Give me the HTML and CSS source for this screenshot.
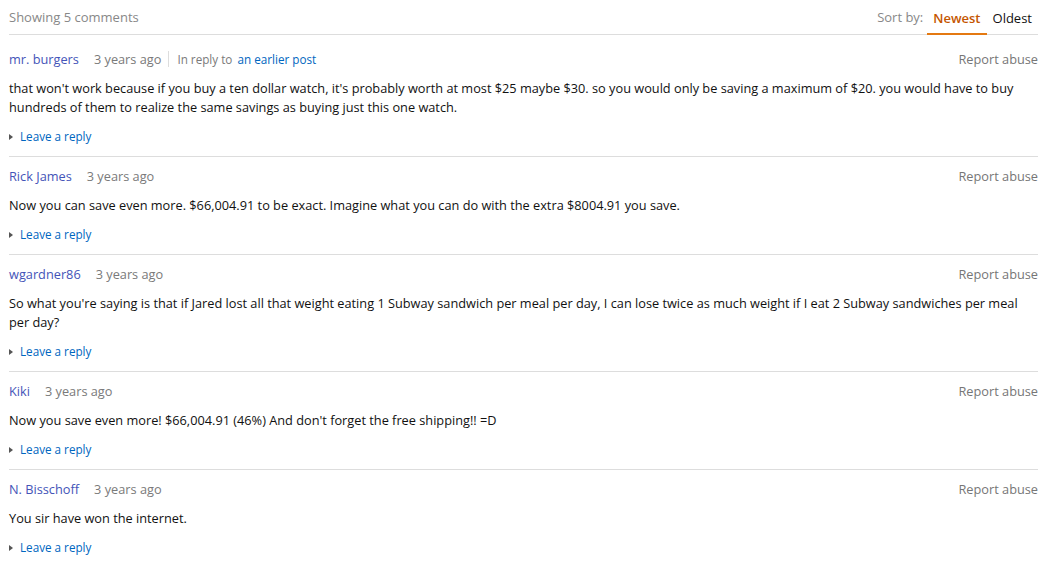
FILE: index.html
```html
<!DOCTYPE html>
<html lang="en">
<head>
<meta charset="UTF-8">
<meta name="viewport" content="width=device-width, initial-scale=1.0">
<title>Comments</title>
<link rel="stylesheet" href="styles.css">
</head>
<body>
  <div class="comments">
    <div class="comments-header">
      <span class="count">Showing 5 comments</span>
      <div class="sort">
        <span class="sort-label">Sort by:</span>
        <a class="sort-tab active" href="#">Newest</a>
        <a class="sort-tab" href="#">Oldest</a>
      </div>
    </div>

    <div class="comment">
      <div class="comment-meta">
        <div class="meta-left">
          <a class="author" href="#">mr. burgers</a>
          <span class="date">3 years ago</span>
          <span class="reply-to">In reply to <a href="#">an earlier post</a></span>
        </div>
        <a class="report" href="#">Report abuse</a>
      </div>
      <p class="comment-text">that won't work because if you buy a ten dollar watch, it's probably worth at most $25 maybe $30. so you would only be saving a maximum of $20. you would have to buy hundreds of them to realize the same savings as buying just this one watch.</p>
      <a class="leave-reply" href="#">Leave a reply</a>
    </div>

    <div class="comment">
      <div class="comment-meta">
        <div class="meta-left">
          <a class="author" href="#">Rick James</a>
          <span class="date">3 years ago</span>
        </div>
        <a class="report" href="#">Report abuse</a>
      </div>
      <p class="comment-text">Now you can save even more. $66,004.91 to be exact. Imagine what you can do with the extra $8004.91 you save.</p>
      <a class="leave-reply" href="#">Leave a reply</a>
    </div>

    <div class="comment">
      <div class="comment-meta">
        <div class="meta-left">
          <a class="author" href="#">wgardner86</a>
          <span class="date">3 years ago</span>
        </div>
        <a class="report" href="#">Report abuse</a>
      </div>
      <p class="comment-text">So what you're saying is that if Jared lost all that weight eating 1 Subway sandwich per meal per day, I can lose twice as much weight if I eat 2 Subway sandwiches per meal per day?</p>
      <a class="leave-reply" href="#">Leave a reply</a>
    </div>

    <div class="comment">
      <div class="comment-meta">
        <div class="meta-left">
          <a class="author" href="#">Kiki</a>
          <span class="date">3 years ago</span>
        </div>
        <a class="report" href="#">Report abuse</a>
      </div>
      <p class="comment-text">Now you save even more! $66,004.91 (46%) And don't forget the free shipping!! =D</p>
      <a class="leave-reply" href="#">Leave a reply</a>
    </div>

    <div class="comment">
      <div class="comment-meta">
        <div class="meta-left">
          <a class="author" href="#">N. Bisschoff</a>
          <span class="date">3 years ago</span>
        </div>
        <a class="report" href="#">Report abuse</a>
      </div>
      <p class="comment-text">You sir have won the internet.</p>
      <a class="leave-reply" href="#">Leave a reply</a>
    </div>
  </div>
</body>
</html>
```

FILE: styles.css
```css
body {
  font-family: "Open Sans", Arial, sans-serif;
  font-size: 12.75px;
  color: #111;
  margin: 0;
  padding: 0;
  background: #fff;
}

a {
  text-decoration: none;
}

.comments {
  margin: 0 7px 0 9px;
}

/* Header with sort tabs */
.comments-header {
  display: flex;
  justify-content: space-between;
  align-items: flex-end;
  height: 34px;
  border-bottom: 1px solid #ddd;
}

.count {
  color: #888;
  font-size: 13px;
  padding-bottom: 8px;
}

.sort {
  display: flex;
  align-items: flex-end;
}

.sort-label {
  color: #888;
  font-size: 13px;
  padding-bottom: 8px;
  margin-right: 4px;
}

.sort-tab {
  color: #111;
  font-size: 13px;
  padding: 0 6px 6px;
  border-bottom: 2px solid transparent;
  margin-bottom: -1px;
}

.sort-tab.active {
  color: #c45500;
  font-weight: 600;
  border-bottom-color: #e47911;
}

/* Comment rows */
.comment {
  border-bottom: 1px solid #ddd;
  padding: 9px 0 10px;
}

.comments-header + .comment {
  padding-top: 14px;
}

.comment:last-child {
  border-bottom: none;
}

.comment-meta {
  display: flex;
  justify-content: space-between;
  align-items: center;
  height: 20px;
}

.meta-left {
  display: flex;
  align-items: center;
}

.author {
  color: #4454b8;
  margin-right: 15px;
}

.date {
  color: #7a7a7a;
}

.reply-to {
  color: #7a7a7a;
  border-left: 1px solid #ddd;
  margin-left: 7px;
  padding-left: 8px;
  font-size: 11.7px;
}

.reply-to a {
  color: #0066c0;
  margin-left: 2px;
}

.report {
  color: #767676;
}

.comment-text {
  margin: 10px 0 10px;
  line-height: 19px;
}

.leave-reply {
  color: #0066c0;
  font-size: 11.7px;
  display: inline-block;
  line-height: 19px;
}

.leave-reply::before {
  content: "";
  display: inline-block;
  border-left: 4px solid #555;
  border-top: 3.5px solid transparent;
  border-bottom: 3.5px solid transparent;
  margin-right: 7px;
  vertical-align: 1px;
}
```
